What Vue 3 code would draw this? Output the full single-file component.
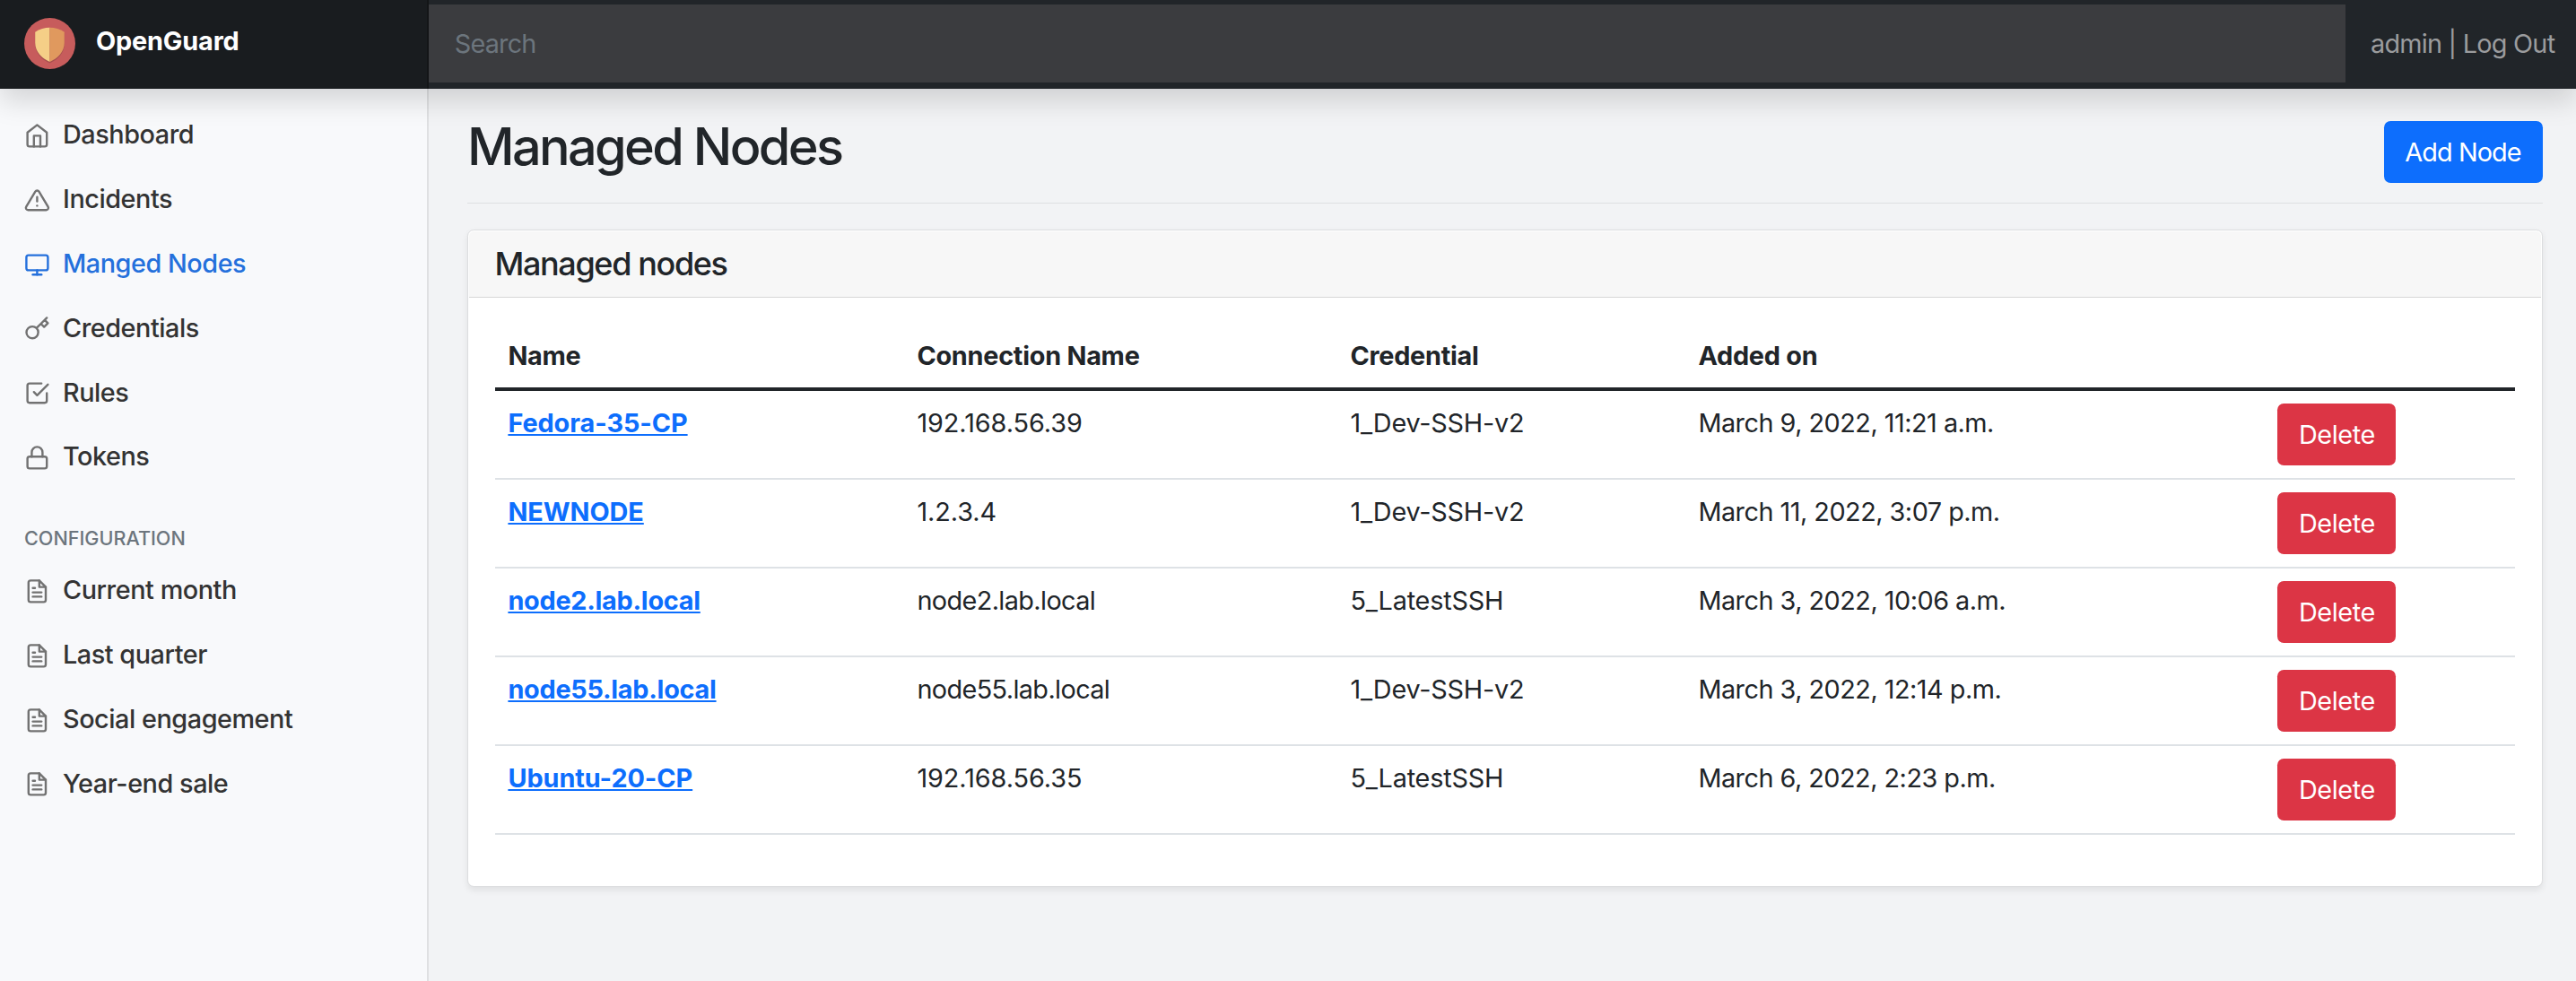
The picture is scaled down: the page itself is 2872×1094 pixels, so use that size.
<script setup>
const icons = {
  home: ['M3 9l9-7 9 7v11a2 2 0 0 1-2 2H5a2 2 0 0 1-2-2z', 'M9 22V12h6v10'],
  alert: ['M10.29 3.86L1.82 18a2 2 0 0 0 1.71 3h16.94a2 2 0 0 0 1.71-3L13.71 3.86a2 2 0 0 0-3.42 0z', 'M12 9v4', 'M12 17h.01'],
  monitor: ['M4 3h16a2 2 0 0 1 2 2v10a2 2 0 0 1-2 2H4a2 2 0 0 1-2-2V5a2 2 0 0 1 2-2z', 'M8 21h8', 'M12 17v4'],
  key: ['M21 2l-2 2m-7.61 7.61a5.5 5.5 0 1 1-7.778 7.778 5.5 5.5 0 0 1 7.777-7.777zm0 0L15.5 7.5m0 0l3 3L22 7l-3-3m-3.5 3.5L19 4'],
  check: ['M9 11l3 3L22 4', 'M21 12v7a2 2 0 0 1-2 2H5a2 2 0 0 1-2-2V5a2 2 0 0 1 2-2h11'],
  lock: ['M5 11h14a2 2 0 0 1 2 2v7a2 2 0 0 1-2 2H5a2 2 0 0 1-2-2v-7a2 2 0 0 1 2-2z', 'M7 11V7a5 5 0 0 1 10 0v4'],
  file: ['M14 2H6a2 2 0 0 0-2 2v16a2 2 0 0 0 2 2h12a2 2 0 0 0 2-2V8z', 'M14 2v6h6', 'M16 13H8', 'M16 17H8', 'M10 9H8'],
}
const mainNav = [
  { label: 'Dashboard', icon: 'home' },
  { label: 'Incidents', icon: 'alert' },
  { label: 'Manged Nodes', icon: 'monitor', active: true },
  { label: 'Credentials', icon: 'key' },
  { label: 'Rules', icon: 'check' },
  { label: 'Tokens', icon: 'lock' },
]
const configNav = ['Current month', 'Last quarter', 'Social engagement', 'Year-end sale'].map((label) => ({ label, icon: 'file' }))
const groups = [
  { title: '', items: mainNav },
  { title: 'Configuration', items: configNav },
]
const nodes = [
  { name: 'Fedora-35-CP', host: '192.168.56.39', credential: '1_Dev-SSH-v2', added: 'March 9, 2022, 11:21 a.m.' },
  { name: 'NEWNODE', host: '1.2.3.4', credential: '1_Dev-SSH-v2', added: 'March 11, 2022, 3:07 p.m.' },
  { name: 'node2.lab.local', host: 'node2.lab.local', credential: '5_LatestSSH', added: 'March 3, 2022, 10:06 a.m.' },
  { name: 'node55.lab.local', host: 'node55.lab.local', credential: '1_Dev-SSH-v2', added: 'March 3, 2022, 12:14 p.m.' },
  { name: 'Ubuntu-20-CP', host: '192.168.56.35', credential: '5_LatestSSH', added: 'March 6, 2022, 2:23 p.m.' },
]
const isHostname = (text) => text.endsWith('.local')
</script>

<template>
  <div class="app">
    <header class="topbar">
      <div class="brand">
        <svg class="logo" viewBox="0 0 57 57">
          <circle cx="28.5" cy="28.5" r="28.5" fill="#c75c5c" />
          <path d="M28.5 12.2c-5.500 0-11.500 1.400-16.300 5v11.800c0 10.500 7.500 17.500 16.300 21.500 8.800-4 16.300-11 16.300-21.500V17.200c-4.800-3.600-10.800-5-16.300-5z" fill="#231f20" opacity=".2" />
          <path d="M28.500 10.700c-5.500 0-11.500 1.400-16.300 5v11.800c0 10.500 7.500 17.500 16.300 21.500z" fill="#f5cf87" />
          <path d="M28.500 10.700c5.500 0 11.500 1.400 16.300 5v11.800c0 10.500-7.500 17.500-16.300 21.500z" fill="#e0995e" />
        </svg>
        <span class="brand-name">OpenGuard</span>
      </div>
      <input class="search" type="text" placeholder="Search" />
      <div class="account">admin | Log Out</div>
    </header>
    <div class="body">
      <nav class="sidebar">
        <template v-for="group in groups" :key="group.title">
          <h6 v-if="group.title" class="nav-title">{{ group.title }}</h6>
          <a v-for="item in group.items" :key="item.label" class="nav-link" :class="{ active: item.active }">
            <svg class="icon" viewBox="0 0 24 24">
              <path v-for="d in icons[item.icon]" :key="d" :d="d" />
            </svg>
            <span class="label">{{ item.label }}</span>
          </a>
        </template>
      </nav>
      <main class="main">
        <div class="page-head">
          <h1>Managed Nodes</h1>
          <button class="btn primary">Add Node</button>
        </div>
        <section class="card">
          <h5 class="card-head">Managed nodes</h5>
          <div class="card-body">
            <table>
              <colgroup>
                <col class="c-name" /><col class="c-host" /><col class="c-cred" /><col class="c-added" /><col />
              </colgroup>
              <thead>
                <tr><th>Name</th><th>Connection Name</th><th>Credential</th><th>Added on</th><th></th></tr>
              </thead>
              <tbody>
                <tr v-for="node in nodes" :key="node.name">
                  <td><a class="node-link" :class="{ tight: isHostname(node.name) }">{{ node.name }}</a></td>
                  <td :class="{ host: isHostname(node.host) }">{{ node.host }}</td>
                  <td class="cred">{{ node.credential }}</td>
                  <td class="added">{{ node.added }}</td>
                  <td><button class="btn danger">Delete</button></td>
                </tr>
              </tbody>
            </table>
          </div>
        </section>
      </main>
    </div>
  </div>
</template>

<style>
body {
  margin: 0;
  background: #f2f3f5;
}
</style>

<style scoped>
.app {
  display: flex;
  flex-direction: column;
  height: 1094px;
  overflow: hidden;
  background: #f2f3f5;
  color: #212529;
  font: 400 28.8px/43.2px Inter, 'Liberation Sans', sans-serif;
}
.app * {
  box-sizing: border-box;
}
.topbar {
  position: relative;
  z-index: 2;
  display: flex;
  flex: none;
  height: 99px;
  background: #212529;
  box-shadow: 0 14.4px 28.8px rgba(0, 0, 0, 0.15);
}
.brand {
  display: flex;
  align-items: flex-start;
  width: 478px;
  padding: 20px 0 0 27px;
  background: #191c1f;
  box-shadow: inset -2px 0 0 #131517;
}
.logo {
  width: 57px;
  height: 57px;
  margin-right: 23px;
}
.brand-name {
  margin-top: 4px;
  color: #fff;
  font-weight: 700;
  letter-spacing: -0.15px;
}
.search {
  flex: 1;
  height: 87px;
  margin: 5px 0 7px;
  padding: 0 28.8px;
  border: 0;
  border-radius: 0;
  background: #3b3c3f;
  color: #fff;
  font: inherit;
  letter-spacing: -0.8px;
}
.search::placeholder {
  color: #6c757d;
  opacity: 1;
}
.account {
  width: 257px;
  padding: 27px 0 0 28px;
  color: #9b9c9e;
  letter-spacing: -0.75px;
  white-space: nowrap;
}
.body {
  display: flex;
  flex: 1;
}
.sidebar {
  width: 478px;
  padding-top: 14.6px;
  background: #f8f9fb;
  box-shadow: inset -2px 0 0 #dfe0e2;
}
.nav-link {
  display: flex;
  align-items: center;
  height: 71.8px;
  padding-left: 27px;
  color: #333;
  font-weight: 500;
  letter-spacing: -0.45px;
}
.label {
  padding-top: 1px;
}
.icon {
  width: 28.8px;
  height: 28.8px;
  margin: 4px 14.2px 0 0;
  fill: none;
  stroke: #727272;
  stroke-width: 2;
  stroke-linecap: round;
  stroke-linejoin: round;
}
.nav-link.active {
  color: #2470dc;
}
.active .icon {
  stroke: #2470dc;
}
.nav-title {
  height: 77.2px;
  margin: 0;
  padding: 35px 0 0 27px;
  color: #6c757d;
  font-size: 21.6px;
  font-weight: 500;
  text-transform: uppercase;
}
.main {
  flex: 1;
  padding: 0 37px 0 43px;
}
.page-head {
  display: flex;
  justify-content: space-between;
  align-items: flex-start;
  height: 128px;
  border-bottom: 1px solid #dee0e2;
}
h1 {
  margin: 30px 0 0;
  font-size: 57.6px;
  font-weight: 500;
  line-height: 69px;
  letter-spacing: -2.66px;
}
.btn {
  display: block;
  height: 69px;
  padding: 0;
  border: 0;
  border-radius: 7.2px;
  color: #fff;
  font: inherit;
  text-align: center;
}
.primary {
  width: 177px;
  margin-top: 36px;
  padding-right: 1px;
  background: #0d6efd;
  letter-spacing: -0.88px;
}
.danger {
  width: 132px;
  background: #dc3545;
  letter-spacing: -0.4px;
}
.card {
  height: 733px;
  margin-top: 29px;
  padding: 1px;
  border: 1px solid #dcdddf;
  border-radius: 7.2px;
  background: #fff;
  box-shadow: 0 3.6px 7.2px rgba(0, 0, 0, 0.075);
}
.card-head {
  height: 74px;
  margin: 0;
  padding-left: 28.5px;
  border-bottom: 1px solid #d8d8d8;
  border-radius: 5.4px 5.4px 0 0;
  background: #f7f7f7;
  font-size: 36px;
  font-weight: 500;
  line-height: 73px;
  letter-spacing: -1.37px;
}
.card-body {
  padding: 28px 29px 0;
}
table {
  width: 100%;
  border-collapse: separate;
  border-spacing: 0;
  table-layout: fixed;
}
.c-name { width: 456px; }
.c-host { width: 483px; }
.c-cred { width: 388px; }
.c-added { width: 646px; }
th {
  height: 76px;
  padding: 14.4px 14.4px 13.6px;
  border-bottom: 4px solid #212529;
  font-weight: 700;
  text-align: left;
  letter-spacing: -0.24px;
}
td {
  height: 99px;
  padding: 14px 14.4px;
  border-bottom: 2px solid #dee2e6;
  vertical-align: top;
  white-space: nowrap;
  letter-spacing: -0.05px;
}
.cred {
  letter-spacing: -0.2px;
}
.host {
  letter-spacing: -0.6px;
}
.added {
  letter-spacing: -0.5px;
}
.node-link {
  color: #0d6efd;
  font-weight: 700;
  text-decoration: underline;
  text-decoration-thickness: 2px;
  text-decoration-skip-ink: none;
  text-underline-offset: 2px;
}
.tight {
  letter-spacing: -0.25px;
}
</style>
